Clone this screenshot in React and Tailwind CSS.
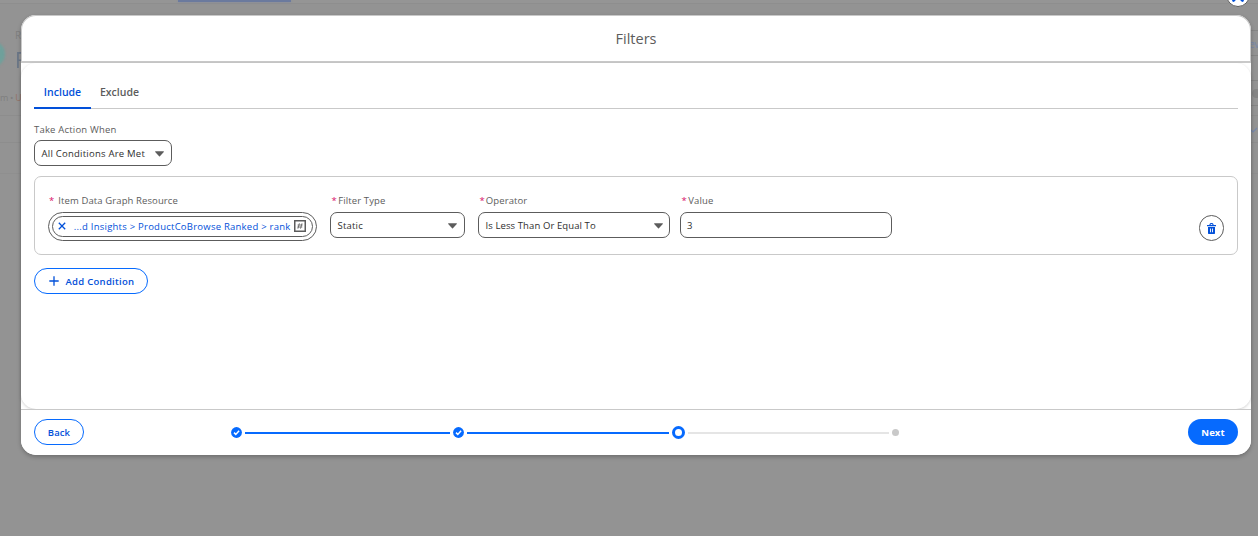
import React from "react";

const Caret = () => (
  <svg width="9" height="6" viewBox="0 0 9 6" className="mt-px shrink-0"><path d="M.2.2h8.6v.7L4.9 5.3a.6.6 0 0 1-.8 0L.2.9Z" fill="#5c5c5c" /></svg>
);

const Label = ({ text, className = "", gap = "gap-px" }) => (
  <div className={"flex h-[14px] items-center leading-[14px] whitespace-nowrap text-[#5c5c5c] " + gap + " " + className}>
    <span className="text-[#d8106a]">*</span>
    <span>{text}</span>
  </div>
);

const Select = ({ text, className, track = "" }) => (
  <div className={"flex h-[26px] items-center justify-between rounded-[7px] border border-[#5c5c5c] bg-white pl-[6.5px] whitespace-nowrap text-[#2e2e2e] " + className}>
    <span className={"pt-[2px] leading-[14px] " + track}>{text}</span>
    <Caret />
  </div>
);

const Check = () => (
  <svg width="11" height="11" viewBox="0 0 11 11" className="shrink-0">
    <circle cx="5.5" cy="5.5" r="5.4" fill="#066afe" />
    <path d="m3 5.6 1.8 1.8 3.3-3.6" fill="none" stroke="#fff" strokeWidth="1.5" />
  </svg>
);

const Backdrop = () => (
  <div className="absolute inset-0 overflow-hidden bg-[#939393]">
    <div className="absolute inset-x-0 top-0 h-[3px] bg-[#959595]" />
    <div className="absolute inset-x-0 top-[3px] h-px bg-[#8e8e8e]" />
    <div className="absolute top-0 left-[178px] h-[2px] w-[113px] bg-[#6b7a9e] shadow-[0_0_3px_#8089a0]" />
    <div className="absolute top-[41px] -left-[21px] size-[26px] rounded-full bg-[#6fa09b] blur-[1px]" />
    <div className="absolute top-[28px] left-[15px] text-[10px] text-[#7f7f7f]">R</div>
    <div className="absolute top-[46px] left-[15px] text-[21px] leading-[28px] text-[#6b7788] blur-[.5px]">F</div>
    <div className="absolute top-[91px] left-0 text-[9px] tracking-[-.3px] whitespace-nowrap text-[#7f7f7f]">m • <span className="text-[#957468]">U</span></div>
    <div className="absolute inset-x-0 top-[115px] h-px bg-[#8d8d8d]" />
    <div className="absolute inset-x-0 top-[142px] h-px bg-[#8d8d8d]" />
    <div className="absolute inset-x-0 top-[173px] h-px bg-[#8f8f8f]" />
    <div className="absolute top-[30px] left-[1240px] h-[26px] w-[40px] border-y border-[#858585] pl-[9px] text-[10px] leading-[26px] tracking-[-.4px] text-[#7889ab]">ev</div>
    <div className="absolute top-[80px] left-[1240px] h-[26px] w-[40px] border-y border-[#858585]" />
    <div className="absolute top-[89px] left-[1252px] size-[9px] rounded-full bg-[#858585]" />
    <svg className="absolute top-[127px] left-[1251px]" width="7" height="7" viewBox="0 0 7 7"><path d="m0 3 2 2 4-4" fill="none" stroke="#7788aa" strokeWidth="1.2" /></svg>
  </div>
);

export default function App() {
  return (
    <div className="relative h-[536px] w-[1258px] overflow-hidden font-['Open_Sans','Noto_Sans',sans-serif] text-[9.5px] tracking-[.1px]">
      <Backdrop />
      <button className="absolute top-[-17px] left-[1226px] flex size-6 items-center justify-center rounded-full border border-[#5c5c5c] bg-white">
        <svg width="12" height="12" viewBox="0 0 12 12" className="mt-[2px]"><path d="m1.500 1.500 9 9M10.500 1.500l-9 9" stroke="#0250d9" strokeWidth="2.600" strokeLinecap="round" /></svg>
      </button>
      <div className="relative mt-[15px] ml-[21px] flex h-[440px] w-[1230px] flex-col rounded-[15px] bg-white shadow-[0_2px_4px_rgba(0,0,0,.25)]">
        <header className="flex h-12 items-center justify-center rounded-t-[15px] border border-b-2 border-[#c9c9c9] bg-white text-[14.5px] tracking-normal text-[#5c5c5c]">
          <h2>Filters</h2>
        </header>
        <main className="h-[346px] rounded-[15px] bg-white px-[13px] shadow-[0_1px_3px_rgba(0,0,0,.18)]">
          <nav className="flex h-[46px] border-b border-[#c9c9c9] pt-[15px] text-[10.5px] font-semibold tracking-normal">
            <div className="flex h-[31px] w-[57px] justify-center border-b-2 border-[#0250d9] pt-[6px] leading-[16px] text-[#0250d9]">Include</div>
            <div className="w-[57px] pt-[6px] text-center leading-[16px] text-[#5c5c5c]">Exclude</div>
          </nav>
          <div className="mt-[14px] h-[14px] leading-[14px] tracking-[.2px] text-[#5c5c5c]">Take Action When</div>
          <Select text="All Conditions Are Met" track="tracking-[.24px]" className="mt-[3px] w-[138px] pr-[7px]" />
          <section className="mt-[10px] flex h-[79px] rounded-[7px] border border-[#c9c9c9] pt-[17px] pl-[13px]">
            <div className="w-[269px]">
              <Label text="Item Data Graph Resource" gap="gap-1" className="pl-px" />
              <div className="mt-[4px] flex h-[29px] items-center rounded-full border border-[#5c5c5c] p-[3px]">
                <div className="flex h-[21px] w-full items-center rounded-full border border-[#5c5c5c] pr-[6px] pl-[5px] text-[#0250d9]">
                  <svg width="8" height="8" viewBox="0 0 8 8" className="mb-px shrink-0"><path d="m.8.8 6.400 6.400M7.200.8.8 7.200" stroke="currentColor" strokeWidth="1.300" /></svg>
                  <span className="ml-auto leading-[14px] tracking-[.24px] whitespace-nowrap">...d Insights &gt; ProductCoBrowse Ranked &gt; rank</span>
                  <svg width="12" height="12" viewBox="0 0 12 12" className="mb-px ml-[3.500px] shrink-0" fill="none" stroke="#5c5c5c"><path d="M.75.75h10.500v10.500H.75Z" strokeWidth="1.500" /><path d="m5.400 3.300-1.500 5.400M8 3.300 6.500 8.700M3.600 5h5M3.300 7h5" strokeWidth=".8" /></svg>
                </div>
              </div>
            </div>
            <div className="ml-[13px] w-[135px]">
              <Label text="Filter Type" gap="gap-[1.5px]" className="pl-[1.5px]" />
              <Select text="Static" track="tracking-[.2px]" className="mt-[4px] pr-[7px]" />
            </div>
            <div className="ml-[13px] w-[192px]">
              <Label text="Operator" gap="gap-[1px]" className="pl-[1.5px]" />
              <Select text="Is Less Than Or Equal To" track="tracking-[.1px]" className="mt-[4px] pr-[6px]" />
            </div>
            <div className="ml-[10px] w-[212px]">
              <Label text="Value" gap="gap-[1.5px]" className="pl-[1.5px]" />
              <div className="mt-[4px] h-[26px] rounded-[7px] border border-[#5c5c5c] pl-[6px] leading-[25px] text-[#2e2e2e]">3</div>
            </div>
            <button className="mt-[21px] mr-[13px] ml-auto flex h-[26px] w-[25px] items-center justify-center rounded-full border border-[#5c5c5c]">
              <svg width="9" height="11" viewBox="0 0 9 11" fill="#0250d9" className="mt-px"><path fillRule="evenodd" d="M0 1.900h2.400C2.500.6 3.300 0 4.500 0s2 .6 2.100 1.900H9v1.300H0ZM3.500 1.900h2c0-.6-.3-.9-1-.9s-1 .3-1 .9ZM1 4h7v6c0 .7-.3 1-1 1H2c-.7 0-1-.3-1-1ZM3 5.600v3.600h.9V5.600Zm2.100 0v3.600H6V5.600Z" /></svg>
            </button>
          </section>
          <button className="mt-[13px] flex h-[26px] w-[114px] items-center rounded-full border border-[#066afe] pl-[14px] font-semibold tracking-[.28px] whitespace-nowrap text-[#0250d9]">
            <svg width="10" height="10" viewBox="0 0 10 10" className="mr-[6.500px] shrink-0"><path d="M5 .3v9.400M.3 5h9.400" stroke="currentColor" strokeWidth="1.300" /></svg>
            <span className="pt-[2px] leading-[14px]">Add Condition</span>
          </button>
        </main>
        <footer className="flex h-[46px] items-center rounded-b-[15px] border-t border-[#c9c9c9] bg-white px-[13px] font-semibold">
          <button className="mb-[2px] flex h-[26px] w-[50px] items-center justify-center rounded-full border border-[#066afe] pt-[3px] leading-[14px] text-[#0250d9]">Back</button>
          <div className="ml-[147px] flex items-center">
            <Check />
            <div className="mx-[3px] h-[2px] w-[205px] bg-[#066afe]" />
            <Check />
            <div className="mx-[3px] h-[2px] w-[202px] bg-[#066afe]" />
            <div className="size-[13px] rounded-full border-[3px] border-[#066afe]" />
            <div className="mx-[3px] h-[2px] w-[201px] bg-[#e5e5e5]" />
            <div className="size-[7px] rounded-full bg-[#c9c9c9]" />
          </div>
          <button className="mb-[2px] ml-auto flex h-[26px] w-[50px] items-center justify-center rounded-full bg-[#066afe] pt-[3px] leading-[14px] font-bold text-white">Next</button>
        </footer>
      </div>
    </div>
  );
}
